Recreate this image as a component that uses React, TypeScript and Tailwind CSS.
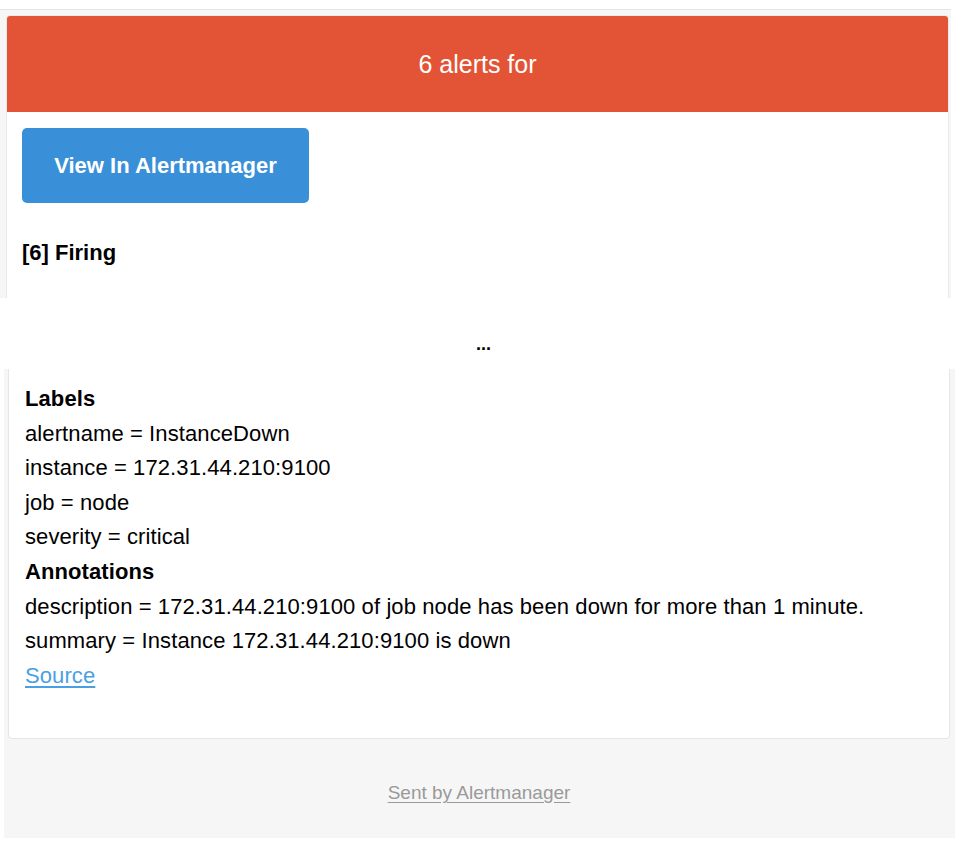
import React from "react";

export default function App() {
  const font = { fontFamily: '"Liberation Sans", Arial, Helvetica, sans-serif' };
  return (
    <div className="w-[966px] h-[844px] bg-white overflow-hidden text-black" style={font}>
      {/* top fragment */}
      <div className="mt-[9px] w-[951px] h-[289px] bg-[#f6f6f6] border-t border-[#e4e4e4] pt-[5px] pl-[6px] pr-[2px] overflow-hidden">
        <div className="h-full bg-white border-x border-t border-[#e9e9e9] rounded-t-[4px] overflow-hidden">
          <div className="h-[97px] bg-[#e35437] flex items-center justify-center text-white text-[25px] pt-[3px] -mx-px -mt-px rounded-t-[4px]">
            6 alerts for
          </div>
          <div className="pl-[15px] pt-[16px]">
            <div className="w-[287px] h-[75px] rounded-[5px] bg-[#3a90d8] flex items-center justify-center text-white font-bold text-[22px]">
              View In Alertmanager
            </div>
            <div className="mt-[33px] font-bold text-[22px] leading-[34px]">[6] Firing</div>
          </div>
        </div>
      </div>

      {/* ellipsis */}
      <div className="h-[71px] flex items-center justify-center">
        <span className="font-bold text-[18px] leading-none pl-[1px] mt-[20px]">...</span>
      </div>

      {/* bottom fragment */}
      <div className="ml-[4px] w-[951px] h-[469px] bg-[#f6f6f6] pl-[4px] pr-[5px] flex flex-col">
        <div className="h-[370px] bg-white border-x border-b border-[#e6e6e6] rounded-b-[4px] pl-[16px] pt-[13px] text-[22px] leading-[34.6px] tracking-[0.1px]">
          <div className="font-bold">Labels</div>
          <div>alertname = InstanceDown</div>
          <div>instance = 172.31.44.210:9100</div>
          <div>job = node</div>
          <div>severity = critical</div>
          <div className="font-bold">Annotations</div>
          <div>description = 172.31.44.210:9100 of job node has been down for more than 1 minute.</div>
          <div>summary = Instance 172.31.44.210:9100 is down</div>
          <div>
            <span className="text-[#4a9fe3] underline underline-offset-[3px]">Source</span>
          </div>
        </div>
        <div className="flex-1 flex items-center justify-center pt-[10px]">
          <span className="text-[#9a9a9a] text-[19px] underline underline-offset-[3px]">Sent by Alertmanager</span>
        </div>
      </div>
    </div>
  );
}
